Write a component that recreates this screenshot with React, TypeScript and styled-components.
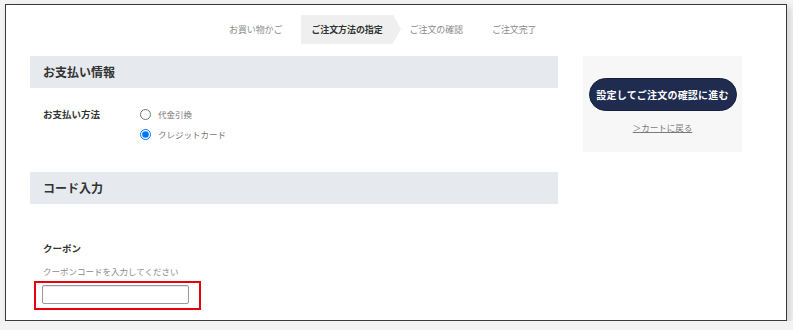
import styled, { createGlobalStyle } from 'styled-components';

const GlobalStyle = createGlobalStyle`
    html, body {
        margin: 0;
        padding: 0;
        background: #f3f3f3;
        font-family: "Noto Sans CJK JP", "Noto Sans", sans-serif;
    }
`;

const Frame = styled.div`
    box-sizing: border-box;
    margin: 4px 0 0 5px;
    width: 782px;
    height: 317px;
    background: #ffffff;
    border: 1px solid #3a3a3a;
    box-shadow: 3px 3px 7px rgba(0, 0, 0, 0.14);
    padding: 10px 0 0 24px;
`;

const StepNav = styled.nav`
    display: flex;
    height: 29px;
    padding-left: 189px;
    margin-bottom: 12px;
`;

const Step = styled.span<{ $active?: boolean }>`
    position: relative;
    display: flex;
    align-items: center;
    padding: 0 10px;
    margin-right: ${(p) => (p.$active ? '7px' : '9px')};
    font-size: 9px;
    letter-spacing: -0.1px;
    color: ${(p) => (p.$active ? '#333333' : '#8a8a8a')};
    font-weight: ${(p) => (p.$active ? 700 : 400)};
    background: ${(p) => (p.$active ? '#efefef' : 'transparent')};
    &::after {
        content: '';
        display: ${(p) => (p.$active ? 'block' : 'none')};
        position: absolute;
        top: 0;
        right: -8px;
        border-left: 8px solid #efefef;
        border-top: 14.5px solid transparent;
        border-bottom: 14.5px solid transparent;
    }
`;

const Columns = styled.div`
    display: grid;
    grid-template-columns: 528px 159px;
    column-gap: 25px;
    align-items: start;
`;

const SectionHeader = styled.h2`
    margin: 0;
    height: 32px;
    line-height: 32px;
    padding-left: 13px;
    background: #e6eaee;
    color: #333333;
    font-size: 12px;
    font-weight: 700;
`;

const PaymentRow = styled.div`
    display: grid;
    grid-template-columns: 97px 1fr;
    padding: 16px 13px 0;
    margin-bottom: 28px;
`;

const FieldLabel = styled.div`
    font-size: 9.5px;
    font-weight: 700;
    color: #333333;
    line-height: 20px;
`;

const Options = styled.div`
    display: flex;
    flex-direction: column;
`;

const Option = styled.label`
    display: flex;
    align-items: center;
    height: 20px;
    font-size: 8.5px;
    color: #777777;
    input {
        width: 11px;
        height: 11px;
        margin: 0 7px 0 0;
    }
`;

const CouponBlock = styled.div`
    padding: 37px 12px 0;
`;

const CouponTitle = styled.div`
    font-size: 9.5px;
    font-weight: 700;
    color: #333333;
    line-height: 14px;
    margin-left: 1px;
`;

const Hint = styled.div`
    font-size: 8.5px;
    color: #8a8a8a;
    line-height: 12px;
    margin: 10px 0 3px 1px;
`;

const Marked = styled.div`
    position: relative;
    display: inline-block;
    &::after {
        content: '';
        position: absolute;
        top: -4px;
        left: -8px;
        right: -12px;
        bottom: -6px;
        border: 2px solid #e8000f;
        pointer-events: none;
    }
`;

const CouponInput = styled.input`
    display: block;
    box-sizing: border-box;
    width: 147px;
    height: 19px;
    border: 1px solid #9a9a9a;
    border-radius: 2px;
    box-shadow: inset 0 1px 1px rgba(0, 0, 0, 0.1);
`;

const SidePanel = styled.aside`
    height: 96px;
    box-sizing: border-box;
    background: #f7f7f7;
    padding-top: 22px;
    display: flex;
    flex-direction: column;
    align-items: center;
`;

const SubmitButton = styled.button`
    width: 148px;
    height: 33px;
    border: 1px solid #15203d;
    border-radius: 17px;
    background: #1f2c50;
    color: #ffffff;
    font-family: inherit;
    font-size: 10px;
    font-weight: 700;
    letter-spacing: 0.2px;
    padding: 0;
`;

const BackLink = styled.a`
    margin-top: 10px;
    font-size: 8.5px;
    line-height: 12px;
    color: #7a7a7a;
    text-decoration: underline;
`;

const steps = ['お買い物かご', 'ご注文方法の指定', 'ご注文の確認', 'ご注文完了'];

const App = () => {
    return (
        <>
            <GlobalStyle />
            <Frame>
                <StepNav>
                    {steps.map((s, i) => (
                        <Step key={s} $active={i === 1}>
                            {s}
                        </Step>
                    ))}
                </StepNav>
                <Columns>
                    <div>
                        <SectionHeader>お支払い情報</SectionHeader>
                        <PaymentRow>
                            <FieldLabel>お支払い方法</FieldLabel>
                            <Options>
                                <Option>
                                    <input type="radio" name="pay" />
                                    代金引換
                                </Option>
                                <Option>
                                    <input type="radio" name="pay" defaultChecked />
                                    クレジットカード
                                </Option>
                            </Options>
                        </PaymentRow>
                        <SectionHeader>コード入力</SectionHeader>
                        <CouponBlock>
                            <CouponTitle>クーポン</CouponTitle>
                            <Hint>クーポンコードを入力してください</Hint>
                            <Marked>
                                <CouponInput type="text" />
                            </Marked>
                        </CouponBlock>
                    </div>
                    <SidePanel>
                        <SubmitButton>設定してご注文の確認に進む</SubmitButton>
                        <BackLink>＞カートに戻る</BackLink>
                    </SidePanel>
                </Columns>
            </Frame>
        </>
    );
};

export default App;
